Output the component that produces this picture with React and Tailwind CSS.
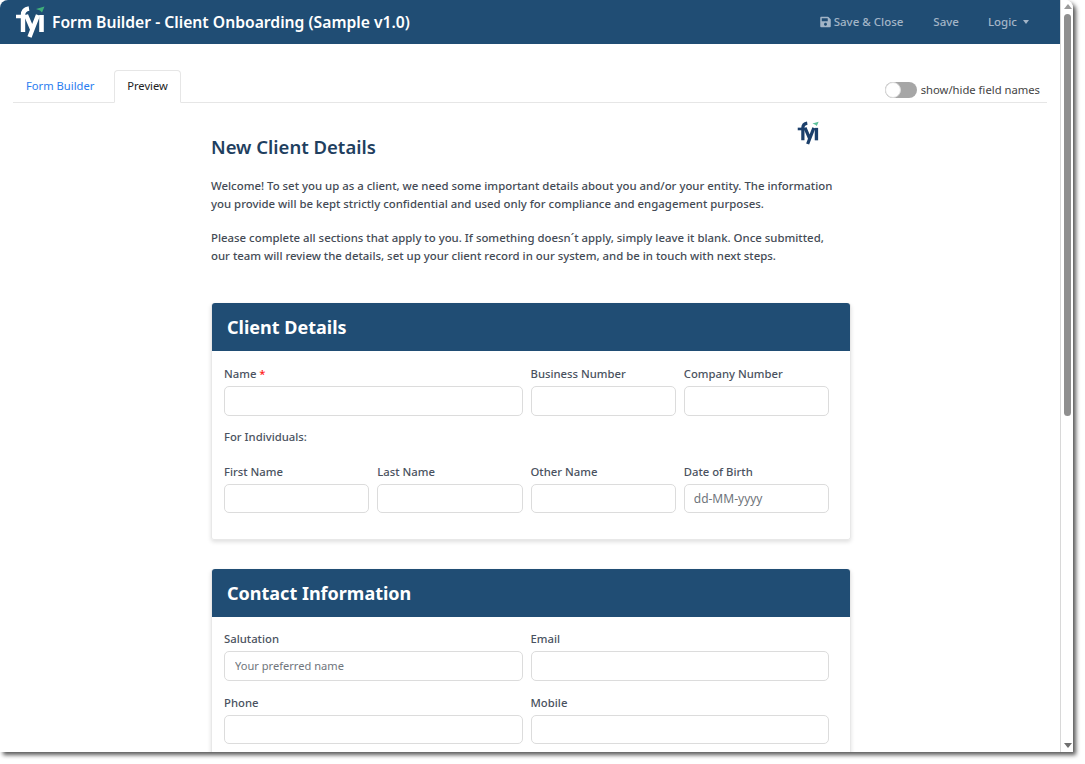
import React from 'react'

function FyiLogo({ className, color, leaf }) {
  return (
    <svg viewBox="0 0 30 32" className={className} fill="none">
      <path d="M8 26 L8 9 Q8 3.5 14 2.5" stroke={color} strokeWidth="4.4" />
      <path d="M1 10.5 H13" stroke={color} strokeWidth="3.6" />
      <path d="M11 9 L17 23 M23 9 L14.5 31" stroke={color} strokeWidth="4.4" />
      <path d="M26.5 9 V26" stroke={color} strokeWidth="4.6" />
      <path d="M21 3 L29.5 0.5 L27 6.5 L25 4.6 Z" fill={leaf} />
    </svg>
  )
}

function SaveIcon() {
  return (
    <svg viewBox="0 0 448 512" className="w-[11px] h-[12px] mr-[3px]" fill="currentColor">
      <path d="M433.9 129.9l-83.9-83.9A48 48 0 0 0 316.1 32H48C21.5 32 0 53.5 0 80v352c0 26.5 21.5 48 48 48h352c26.5 0 48-21.5 48-48V163.9a48 48 0 0 0-14.1-33.9zM224 416c-35.3 0-64-28.7-64-64s28.7-64 64-64 64 28.7 64 64-28.7 64-64 64zm96-304.5V212c0 6.6-5.4 12-12 12H76c-6.6 0-12-5.4-12-12V108c0-6.6 5.4-12 12-12h228.5c3.2 0 6.2 1.3 8.5 3.5l3.5 3.5c2.3 2.3 3.5 5.3 3.5 8.5z" />
    </svg>
  )
}

function Field({ label, required, placeholder, inputClass = 'text-[11.1px] px-[10px]', className = '' }) {
  return (
    <div className={className}>
      <div className="text-[11.3px] leading-[17px] font-medium text-[#4a5260] mb-[4px]">
        {label}
        {required && <span className="text-[#ff2020]"> *</span>}
      </div>
      <input
        placeholder={placeholder}
        className={`block w-full h-[29.6px] bg-white border border-[#dcdcdc] rounded-[5px] outline-none placeholder:text-[#70757c] ${inputClass}`}
      />
    </div>
  )
}

function Card({ title, children, className = '' }) {
  return (
    <section className={`w-[640px] border border-t-0 border-[#e8e8e8] rounded-[3px] shadow-[0_2px_4px_rgba(0,0,0,0.13)] ${className}`}>
      <h2 className="h-[48px] flex items-center pl-[15px] bg-[#204d74] rounded-t-[3px] text-white text-[18px] font-bold">{title}</h2>
      {children}
    </section>
  )
}

export default function App() {
  return (
    <div className="w-[1085px] h-[764px] bg-white font-['Noto_Sans',sans-serif] overflow-hidden">
      <div className="flex w-[1073px] h-[752px] bg-white rounded-tl-[8px] rounded-tr-[8px] overflow-hidden shadow-[3px_3px_4px_rgba(0,0,0,0.65)]">
        <div className="w-[1061px] shrink-0 border-r border-[#d8d8d8]">
          <header className="h-[44px] flex items-center bg-[#204d74] text-white">
            <FyiLogo className="w-[30px] h-[32px] ml-[15px]" color="#ffffff" leaf="#3fae7a" />
            <h1 className="ml-[7px] mt-[1px] text-[15.7px] font-semibold">Form Builder - Client Onboarding (Sample v1.0)</h1>
            <nav className="ml-auto flex items-center text-[11.5px] font-medium text-[#a3b5c7]">
              <span className="flex items-center"><SaveIcon />Save &amp; Close</span>
              <span className="ml-[30px]">Save</span>
              <span className="ml-[29px] flex items-center">Logic<span className="ml-[6px] border-x-[3.5px] border-x-transparent border-t-[4px] border-t-[#a3b5c7]" /></span>
              <span className="w-[31px]" />
            </nav>
          </header>

          <div className="mx-[13px] mt-[26px] h-[33px] flex items-end border-b border-[#e6e6e6]">
            <div className="w-[101px] h-[32px] flex items-center pl-[13px] text-[11.2px] text-[#2a7df0]">Form Builder</div>
            <div className="w-[67px] h-[33px] mb-[-1px] flex items-center justify-center text-[11.2px] text-[#222] bg-white border border-[#e6e6e6] border-b-white rounded-t-[4px]">Preview</div>
            <div className="ml-auto mr-[7px] mb-[3px] flex items-center text-[11.25px] text-[#444]">
              <span className="relative w-[32px] h-[16px] mr-[4px] -translate-y-[1px] rounded-full bg-[#a6a6a6]">
                <span className="absolute left-0 top-0 w-[16px] h-[16px] rounded-full bg-white border border-[#ddd]" />
              </span>
              show/hide field names
            </div>
          </div>

          <main className="ml-[211px] w-[640px]">
            <div className="relative h-[200px]">
              <FyiLogo className="absolute left-[586px] top-[18px] w-[22px] h-[24px]" color="#1b3f6b" leaf="#5cc19a" />
              <h2 className="pt-[32px] text-[18.5px] leading-[24px] font-semibold text-[#1f3f5f]">New Client Details</h2>
              <p className="mt-[18px] w-[630px] text-[11.4px] leading-[18px] font-medium text-[#444b55]">
                Welcome! To set you up as a client, we need some important details about you and/or your entity. The information you provide will be kept strictly confidential and used only for compliance and engagement purposes.
              </p>
              <p className="mt-[16px] w-[630px] text-[11.4px] leading-[18px] font-medium text-[#444b55]">
                Please complete all sections that apply to you. If something doesn´t apply, simply leave it blank. Once submitted, our team will review the details, set up your client record in our system, and be in touch with next steps.
              </p>
            </div>

            <Card title="Client Details">
              <div className="pl-[12px] pr-[21px] pt-[14px] pb-[26px]">
                <div className="grid grid-cols-4 gap-x-2">
                  <Field label="Name" required className="col-span-2" />
                  <Field label="Business Number" />
                  <Field label="Company Number" />
                </div>
                <div className="mt-[12px] mb-[18px] text-[11.3px] leading-[17px] font-medium text-[#4a5260]">For Individuals:</div>
                <div className="grid grid-cols-4 gap-x-2">
                  <Field label="First Name" />
                  <Field label="Last Name" />
                  <Field label="Other Name" />
                  <Field label="Date of Birth" placeholder="dd-MM-yyyy" inputClass="text-[12px] px-[9px]" />
                </div>
              </div>
            </Card>

            <Card title="Contact Information" className="mt-[29px]">
              <div className="pl-[12px] pr-[21px] pt-[13px] pb-[26px]">
                <div className="grid grid-cols-2 gap-x-2 gap-y-[13px]">
                  <Field label="Salutation" placeholder="Your preferred name" />
                  <Field label="Email" />
                  <Field label="Phone" />
                  <Field label="Mobile" />
                </div>
              </div>
            </Card>
          </main>
        </div>

        <div className="relative w-[12px] shrink-0 bg-white">
          <span className="absolute left-[3px] top-[4px] border-x-[4px] border-x-transparent border-b-[5px] border-b-[#9a9a9a]" />
          <div className="absolute left-[3px] top-[14px] w-[7px] h-[402px] rounded-full bg-[#8f8f8f]" />
          <span className="absolute left-[3px] bottom-[4px] border-x-[4px] border-x-transparent border-t-[5px] border-t-[#707070]" />
        </div>
      </div>
    </div>
  )
}
